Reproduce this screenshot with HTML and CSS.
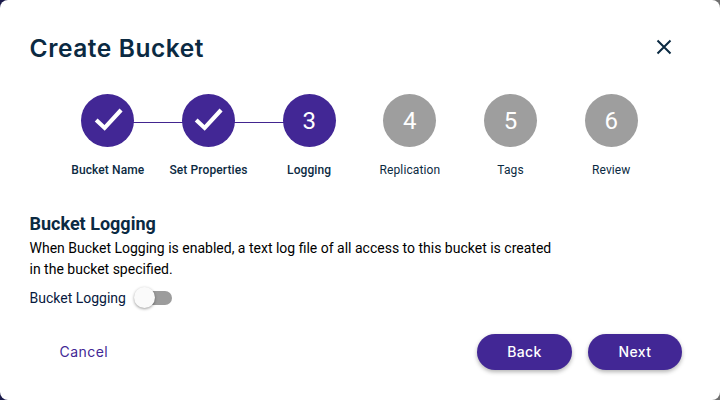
FILE: index.html
```html
<!DOCTYPE html>
<html lang="en">
<head>
<meta charset="utf-8">
<title>Create Bucket</title>
<link rel="stylesheet" href="styles.css">
</head>
<body>
<main class="backdrop">
  <section class="dialog">
    <header class="dialog-header">
      <h1 class="dialog-title">Create Bucket</h1>
      <button class="close" aria-label="Close">
        <svg width="24" height="24" viewBox="0 0 24 24"><path d="M5.5 5.5l13 13M18.5 5.5l-13 13" fill="none" stroke="#0b2a42" stroke-width="2"/></svg>
      </button>
    </header>
    <ol class="stepper">
      <li class="step done">
        <span class="dot"><svg width="36" height="36" viewBox="0 0 36 36"><path d="M5.5 18.5l9 8.5L32 8" transform="translate(1 -0.5) scale(.94)" fill="none" stroke="#fff" stroke-width="4.4"/></svg></span>
        <span class="label">Bucket Name</span>
      </li>
      <li class="step done">
        <span class="dot"><svg width="36" height="36" viewBox="0 0 36 36"><path d="M5.5 18.5l9 8.5L32 8" transform="translate(1 -0.5) scale(.94)" fill="none" stroke="#fff" stroke-width="4.4"/></svg></span>
        <span class="label">Set Properties</span>
      </li>
      <li class="step active">
        <span class="dot">3</span>
        <span class="label">Logging</span>
      </li>
      <li class="step"><span class="dot">4</span><span class="label">Replication</span></li>
      <li class="step"><span class="dot">5</span><span class="label">Tags</span></li>
      <li class="step"><span class="dot">6</span><span class="label">Review</span></li>
    </ol>
    <div class="content">
      <h2 class="section-title">Bucket Logging</h2>
      <p class="section-text">When Bucket Logging is enabled, a text log file of all access to this bucket is created in the bucket specified.</p>
      <div class="toggle-row">
        <span class="toggle-label">Bucket Logging</span>
        <span class="toggle"><span class="track"></span><span class="thumb"></span></span>
      </div>
    </div>
    <footer class="actions">
      <button class="btn-text">Cancel</button>
      <div class="actions-right">
        <button class="btn back">Back</button>
        <button class="btn next">Next</button>
      </div>
    </footer>
  </section>
</main>
</body>
</html>
```
FILE: styles.css
```css
* { box-sizing: border-box; }
html, body { margin: 0; padding: 0; }
body { width: 720px; height: 400px; overflow: hidden; }
.backdrop { width: 720px; height: 400px; background: linear-gradient(90deg, #1a1a4a 0 50%, #6f6f6f 50% 100%); }
.dialog { width: 720px; height: 400px; background: #fff; border-radius: 8px; padding: 30px 30px 0 29.5px; display: flex; flex-direction: column; }
.dialog-header { display: flex; justify-content: space-between; align-items: center; height: 37px; padding-right: 14px; }
.dialog-title { margin: 0; font: 600 24.5px/37px Inter, sans-serif; letter-spacing: .58px; color: #0b2a42; }
.close { background: none; border: 0; padding: 0; width: 24px; height: 24px; margin-top: -3px; }
.stepper { list-style: none; margin: 27px 0 0; padding: 0 0 0 27.95px; display: flex; }
.step { width: 100.7px; display: flex; flex-direction: column; align-items: center; position: relative; }
.step.done::after { content: ""; position: absolute; left: 76px; top: 28px; width: 50px; height: 1px; background: #42258f; }
.dot { width: 53px; height: 53px; border-radius: 50%; background: #9e9e9e; color: #fff; display: flex; align-items: center; justify-content: center; font: 400 24px/1 Roboto, sans-serif; }
.done .dot, .active .dot { background: #422795; }
.label { margin-top: 16px; font: 400 12px/14px Roboto, sans-serif; letter-spacing: .1px; color: #0b2a42; white-space: nowrap; }
.done .label, .active .label { font-weight: 500; }
.content { margin-top: 35px; }
.section-title { margin: 0; font: 700 18px/24px Roboto, sans-serif; color: #0b2a42; }
.section-text { margin: 2px 0 0; width: 530px; font: 400 14px/21px Roboto, sans-serif; color: #000; }
.toggle-row { display: flex; align-items: center; margin-top: 7px; height: 22px; }
.toggle-label { font: 400 14px/22px Roboto, sans-serif; color: #07193e; }
.toggle { position: relative; width: 38px; height: 22px; margin-left: 8.5px; }
.track { position: absolute; left: 3px; top: 4px; width: 35px; height: 14px; border-radius: 7px; background: #9c9c9c; }
.thumb { position: absolute; left: 0; top: 0; width: 21px; height: 21px; border-radius: 50%; background: #fafafa; box-shadow: 0 1px 3px rgba(0,0,0,.4); }
.actions { display: flex; justify-content: space-between; align-items: center; margin-top: 25px; padding-right: 8px; }
.btn-text { background: none; border: 0; padding: 0 0 0 30px; font: 400 14px/36px Inter, sans-serif; letter-spacing: .45px; color: #422795; }
.actions-right { display: flex; gap: 16px; }
.btn { height: 36px; border: 0; border-radius: 18px; background: #422795; color: #fff; font: 500 14px/36px Inter, sans-serif; letter-spacing: .4px; box-shadow: 0 2px 4px rgba(0,0,0,.3); padding: 0; }
.back { width: 95px; }
.next { width: 94px; }
```
